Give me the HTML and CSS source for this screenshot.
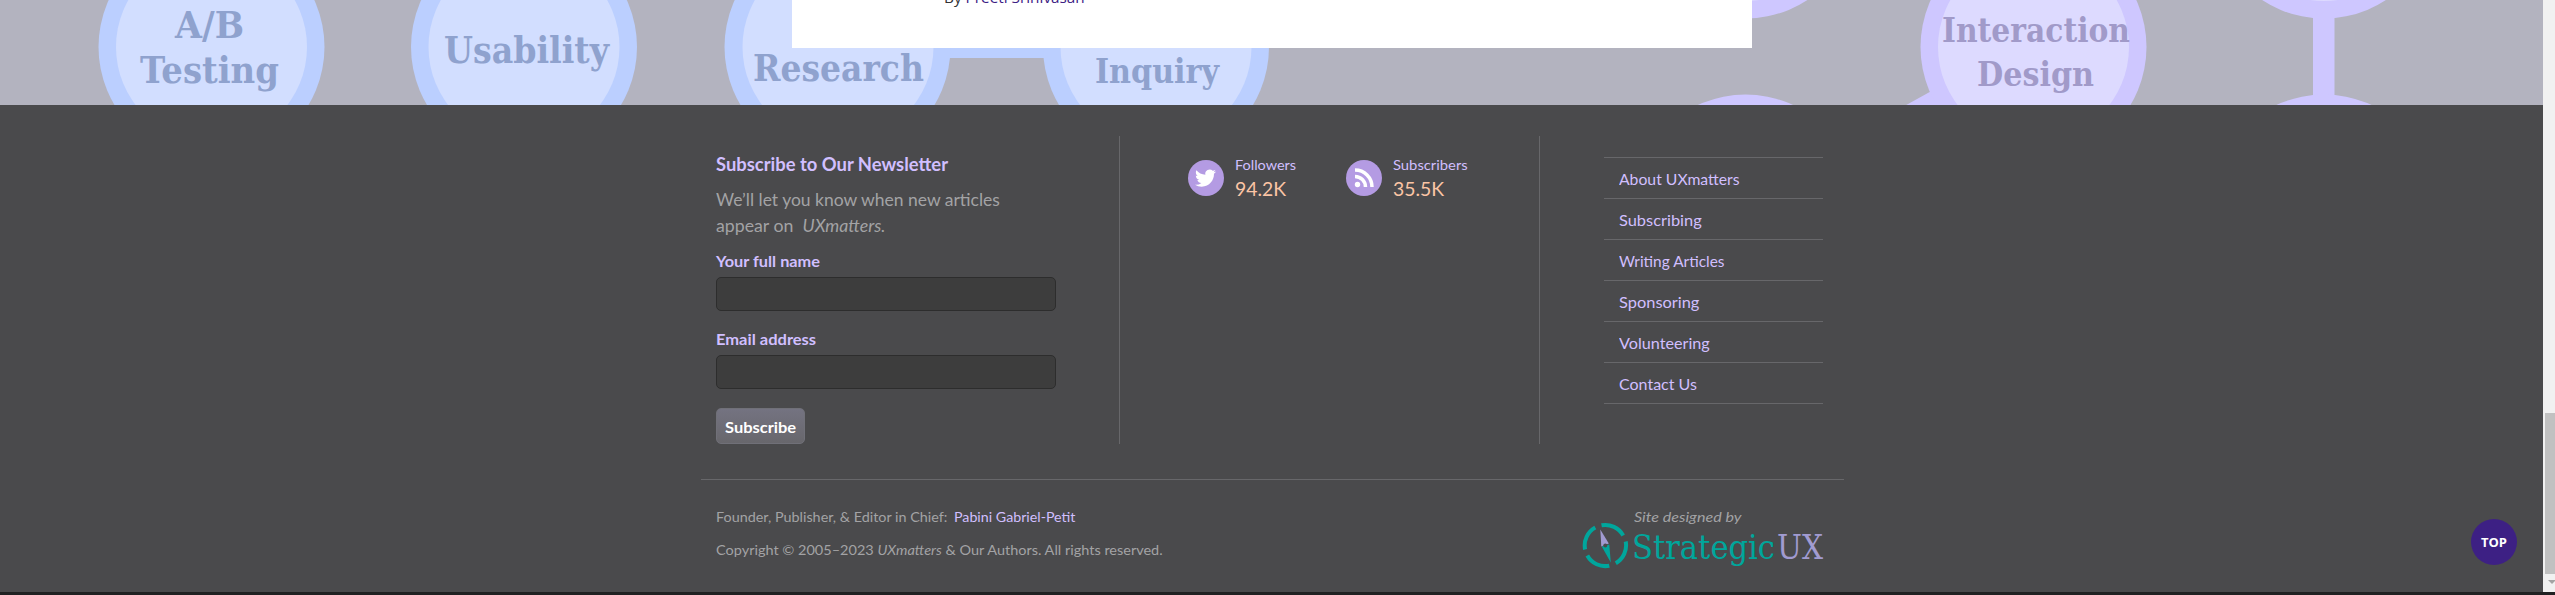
FILE: index.html
```
<!DOCTYPE html>
<html lang="en">
<head>
<meta charset="utf-8">
<title>UXmatters</title>
<link rel="stylesheet" href="styles.css">
</head>
<body>
<div class="window">
  <div class="page">
    <section class="hero">
      <svg class="diagram" width="2543" height="105" viewBox="0 0 2543 105">
        <g class="blue-ring">
          <rect x="940" y="36" width="115" height="22"/>
          <circle cx="211.5" cy="47" r="113"/><circle cx="524" cy="47" r="113"/>
          <circle cx="837.5" cy="47" r="113"/><circle cx="1156" cy="47" r="113"/>
        </g>
        <g class="blue-core">
          <circle cx="211.5" cy="47" r="95.5"/><circle cx="524" cy="47" r="95.5"/>
          <circle cx="838" cy="47" r="95.5"/><circle cx="1156" cy="47" r="95.5"/>
        </g>
        <g class="violet-ring">
          <path d="M2033.5 47 1745 207" stroke-width="22"/>
          <rect x="2313" y="10" width="21.5" height="95"/>
          <circle cx="1745.500" cy="-94.500" r="113"/><circle cx="1745.500" cy="207.500" r="113"/>
          <circle cx="2033.500" cy="47" r="113"/>
          <circle cx="2324" cy="-94.500" r="113"/><circle cx="2324" cy="207.500" r="113"/>
        </g>
        <g class="violet-core">
          <circle cx="2033.500" cy="47" r="95.500"/><circle cx="1745.500" cy="-94.500" r="95.500"/><circle cx="2324" cy="-94.500" r="95.500"/>
        </g>
        <g class="blue-label">
          <text x="175" y="38" textLength="69" lengthAdjust="spacingAndGlyphs">A/B</text>
          <text x="140" y="82.500" textLength="139" lengthAdjust="spacingAndGlyphs">Testing</text>
          <text x="444" y="62.500" textLength="165" lengthAdjust="spacingAndGlyphs">Usability</text>
          <text x="753" y="80.500" textLength="171" lengthAdjust="spacingAndGlyphs">Research</text>
          <text class="smaller" x="1095" y="82.500" textLength="124" lengthAdjust="spacingAndGlyphs">Inquiry</text>
        </g>
        <g class="violet-label">
          <text x="1942" y="42" textLength="188" lengthAdjust="spacingAndGlyphs">Interaction</text>
          <text x="1977" y="86" textLength="117" lengthAdjust="spacingAndGlyphs">Design</text>
        </g>
      </svg>
      <div class="article"><p class="byline"><span class="fit" data-w="141">By <a>Preeti Srinivasan</a></span></p></div>
    </section>

    <footer class="footer">
      <div class="columns">
        <form class="newsletter">
          <h2 class="title"><span class="fit" data-w="232">Subscribe to Our Newsletter</span></h2>
          <p class="intro"><span class="fit" data-w="284">We’ll let you know when new articles</span><br><span class="fit" data-w="170">appear on&nbsp; <em>UXmatters.</em></span></p>
          <label class="label"><span class="fit" data-w="104">Your full name</span></label>
          <input class="field" type="text">
          <label class="label"><span class="fit" data-w="100">Email address</span></label>
          <input class="field last" type="text">
          <button class="submit" type="button"><span class="fit" data-w="71">Subscribe</span></button>
        </form>
        <div class="social">
          <div class="stat">
            <svg class="stat-icon" width="36" height="36" viewBox="0 0 36 36"><circle cx="18" cy="18" r="18"/><path transform="translate(7 7.500) scale(.88)" d="M23.950 4.570a10 10 0 0 1-2.820.770 4.960 4.960 0 0 0 2.160-2.720c-.950.560-2 .960-3.120 1.190a4.920 4.920 0 0 0-8.380 4.480C7.690 8.090 4.070 6.130 1.640 3.160a4.820 4.820 0 0 0-.670 2.480c0 1.710.870 3.210 2.190 4.100a4.900 4.900 0 0 1-2.230-.620v.060a4.920 4.920 0 0 0 3.950 4.830 5 5 0 0 1-2.210.080 4.940 4.940 0 0 0 4.600 3.420A9.870 9.870 0 0 1 0 19.540a13.990 13.990 0 0 0 7.550 2.210c9.050 0 14-7.500 14-13.980 0-.210 0-.420-.020-.630a9.940 9.940 0 0 0 2.460-2.550z"/></svg>
            <div class="stat-text"><span class="stat-name"><span class="fit" data-w="61">Followers</span></span><span class="stat-value"><span class="fit" data-w="51">94.2K</span></span></div>
          </div>
          <div class="stat">
            <svg class="stat-icon" width="36" height="36" viewBox="0 0 36 36"><circle cx="18" cy="18" r="18"/><circle class="dot" cx="11.500" cy="24.500" r="2.700"/><path class="wave" d="M9 16.500a10.500 10.500 0 0 1 10.500 10.500M9 10a17 17 0 0 1 17 17"/></svg>
            <div class="stat-text"><span class="stat-name"><span class="fit" data-w="75">Subscribers</span></span><span class="stat-value"><span class="fit" data-w="51">35.5K</span></span></div>
          </div>
        </div>
        <nav class="links">
          <a class="link"><span class="fit" data-w="121">About UXmatters</span></a>
          <a class="link"><span class="fit" data-w="83">Subscribing</span></a>
          <a class="link"><span class="fit" data-w="106">Writing Articles</span></a>
          <a class="link"><span class="fit" data-w="80">Sponsoring</span></a>
          <a class="link"><span class="fit" data-w="91">Volunteering</span></a>
          <a class="link"><span class="fit" data-w="78">Contact Us</span></a>
        </nav>
      </div>
      <div class="legal">
        <div class="credits">
          <p class="credit"><span class="fit" data-w="231">Founder, Publisher, &amp; Editor in Chief:</span><a class="founder"><span class="fit" data-w="121">Pabini Gabriel-Petit</span></a></p>
          <p class="credit"><span class="fit" data-w="447">Copyright © 2005–2023 <em>UXmatters</em> &amp; Our Authors. All rights reserved.</span></p>
        </div>
        <div class="designer">
          <p class="designed"><span class="fit" data-w="108"><em>Site designed by</em></span></p>
          <svg class="brand" width="242" height="48" viewBox="0 0 242 48">
            <g class="compass" transform="translate(23.300 23.500)">
              <path d="M-3.800-20.200A20.500 20.500 0 0 1 17.900-10M20.400-4A20.500 20.500 0 0 1 10.500 17.700M4 20.200A20.500 20.500 0 0 1-18 10M-20.200 4A20.500 20.500 0 0 1-10-18"/>
              <path class="south" d="M-3.500 1 5.500 17 4-1z"/><path class="north" d="M-5-16-4 1 3.500-2z"/><circle cx="0" cy="0" r="2"/>
            </g>
            <text class="brand-green" x="50" y="36.500" textLength="143" lengthAdjust="spacingAndGlyphs">Strategic</text>
            <text class="brand-violet" x="195" y="36.500" textLength="46" lengthAdjust="spacingAndGlyphs">UX</text>
          </svg>
        </div>
      </div>
      <a class="top">TOP</a>
    </footer>
  </div>
  <div class="scrollbar"><div class="thumb"></div><svg class="arrow" width="10" height="6" viewBox="0 0 10 6"><path d="M1 1h8L5 5z"/></svg></div>
</div>
<script src="fit.js"></script>
</body>
</html>
```
FILE: styles.css
```
* { box-sizing: border-box; }
body { margin: 0; height: 595px; overflow: hidden; background: #202122; font-family: Lato, "Liberation Sans", sans-serif; color: #a3a3a5; }
p, h2 { margin: 0; }
.window { display: flex; height: 592px; }
.page { width: 2543px; }
.hero { position: relative; height: 105px; background: #b3b3bf; }
.diagram { display: block; }
.blue-ring { fill: #bbcfff; }
.blue-core { fill: #d2deff; }
.violet-ring { fill: #cec7ff; stroke: none; }
.violet-ring path { stroke: #cec7ff; }
.violet-core { fill: #dddaff; }
.blue-label, .violet-label { font: bold 37px "DejaVu Serif", serif; fill: #8fa2ce; }
.blue-label .smaller, .violet-label { font-size: 34px; }
.violet-label { fill: #a19ac9; }
.article { position: absolute; left: 792px; top: 0; width: 960px; height: 48px; background: #fff; overflow: hidden; }
.byline { margin: -13px 0 0 152px; font: 15px/20px "Open Sans", sans-serif; color: #333; white-space: nowrap; }
.byline a { color: #3c2084; }
.footer { position: relative; height: 487px; padding-top: 31px; background: #4a4a4c; }
.columns { display: flex; width: 1143px; height: 308px; margin-left: 701px; padding-left: 15px; }
.newsletter { display: flex; flex-direction: column; align-items: flex-start; width: 404px; padding-top: 18px; border-right: 1px solid #67676a; }
.fit { display: inline-block; white-space: nowrap; transform-origin: 0 50%; }
.title { font-size: 18px; line-height: 20px; color: #d1bfff; }
.intro { margin: 13px 0 12px; font-size: 17px; line-height: 26px; }
.label { font-size: 16px; line-height: 20px; font-weight: bold; color: #d1bfff; }
.field { width: 340px; height: 34px; margin: 6px 0 18px; border: 1px solid #2d2d2d; border-radius: 5px; background: #3d3d3d; }
.field.last { margin-bottom: 19px; }
.submit { width: 89px; height: 36px; padding: 0 0 0 8px; border: 1px solid #707078; border-radius: 5px; background: linear-gradient(#747381, #68676c); color: #fff; font: bold 16px Lato, sans-serif; text-align: left; }
.social { display: flex; width: 420px; padding: 18px 0 0 68px; border-right: 1px solid #67676a; }
.stat { display: flex; width: 158px; gap: 11px; }
.stat-icon { margin-top: 6px; flex: none; fill: #b49be3; }
.stat-icon path, .stat-icon .dot { fill: #fff; }
.stat-icon .wave { fill: none; stroke: #fff; stroke-width: 3.5; }
.stat-text { display: flex; flex-direction: column; color: #d1bfff; font-size: 14px; line-height: 22px; }
.stat-value { color: #fbc5a5; font-size: 19px; line-height: 26px; }
.links { display: flex; flex-direction: column; width: 219px; height: 248px; margin: 21px 0 0 64px; border-top: 1px solid #67676a; }
.link { height: 41px; padding-left: 15px; border-bottom: 1px solid #67676a; color: #d1bfff; font-size: 16px; line-height: 41px; }
.legal { display: flex; justify-content: space-between; width: 1143px; margin: 35px 0 0 701px; padding: 20px 20px 0 15px; border-top: 1px solid #67676a; }
.credit { display: flex; height: 33px; font-size: 14px; line-height: 34px; }
.founder { margin-left: 7px; color: #d1bfff; }
.designer { width: 242px; }
.designed { height: 22px; padding-left: 52px; font-size: 14px; line-height: 34px; }
.brand { display: block; }
.compass path { fill: none; stroke: #00a69c; stroke-width: 4; }
.compass .south { fill: #00a69c; stroke: none; }
.compass .north { fill: #a19bd1; stroke: none; }
.compass circle { fill: #4a4a4c; }
.brand-green, .brand-violet { font: 34px "DejaVu Serif", serif; fill: #00a69c; }
.brand-violet { fill: #a19bd1; }
.top { position: absolute; left: 2471px; top: 414px; width: 46px; height: 46px; border-radius: 50%; background: #3d2084; color: #fff; font: bold 13px/46px "Open Sans", sans-serif; text-align: center; }
.scrollbar { display: flex; flex-direction: column; width: 12px; padding: 413px 0 0 2px; background: #f1f1f1; }
.thumb { height: 161px; background: #c1c1c1; }
.arrow { margin: 5px 0 0 2px; fill: #a3a3a3; }
```
FILE: fit.js
```
for (const el of document.querySelectorAll('.fit')) {
  const target = Number(el.dataset.w);
  const natural = el.offsetWidth;
  el.style.transform = `scaleX(${target / natural})`;
  el.style.marginRight = `${target - natural}px`;
}
```
